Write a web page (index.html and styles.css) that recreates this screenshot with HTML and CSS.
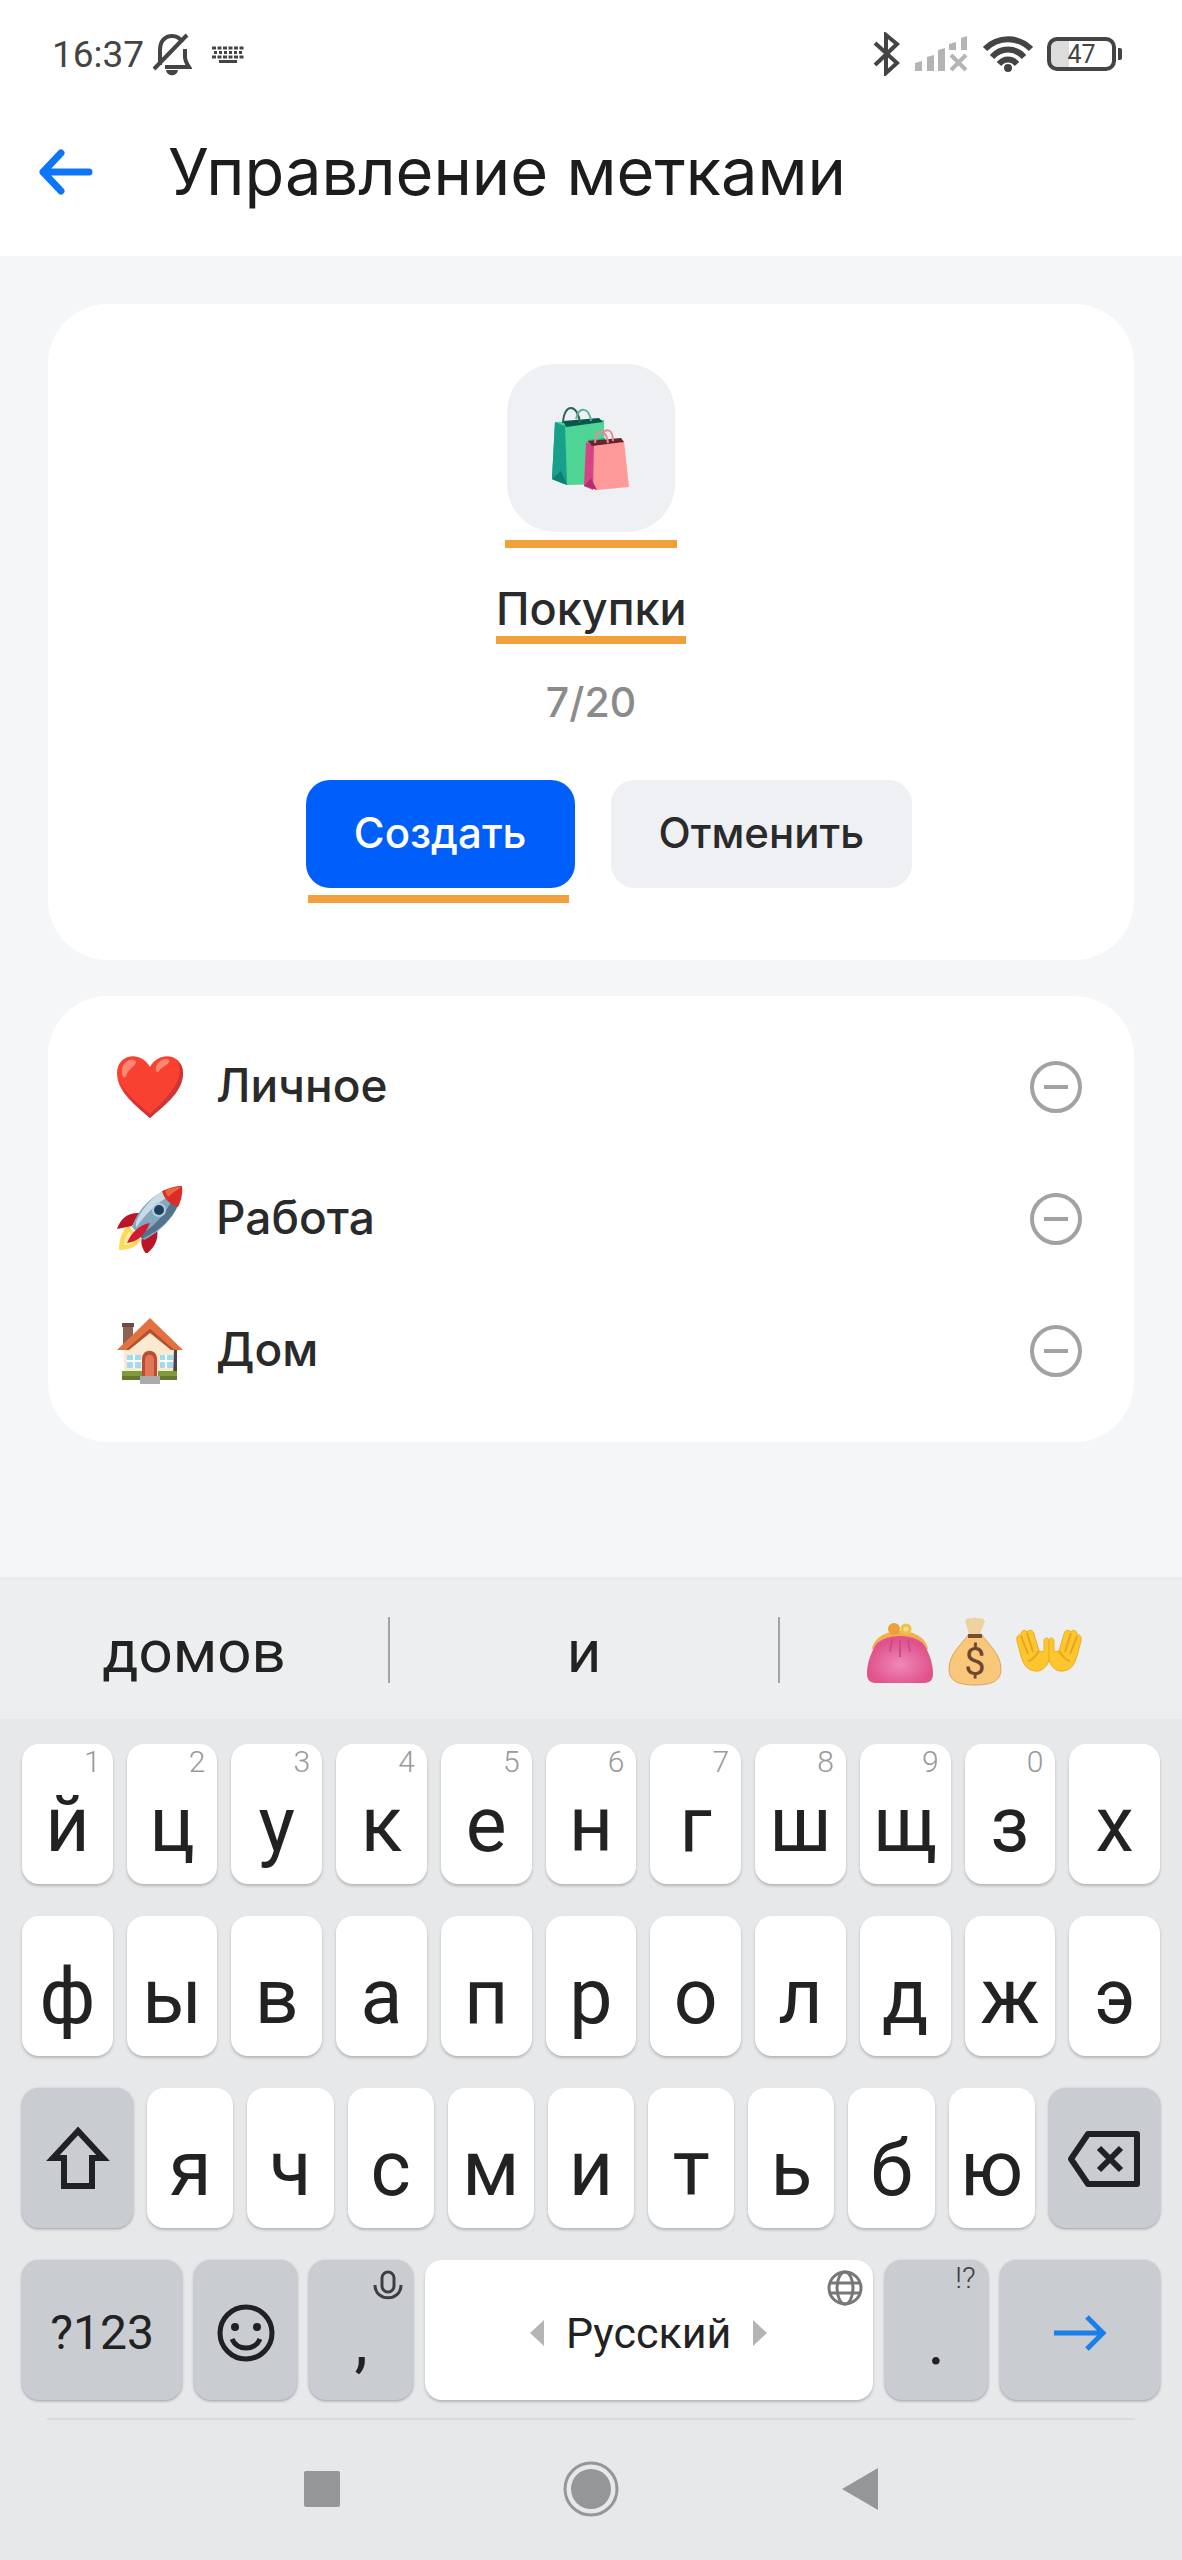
FILE: index.html
```html
<!DOCTYPE html>
<html lang="ru">
<head>
    <meta charset="UTF-8">
    <meta name="viewport" content="width=device-width, initial-scale=1">
    <title>Управление метками</title>
    <link rel="stylesheet" href="styles.css">
</head>
<body>
    <div class="screen">
        <header class="top">
            <div class="status-bar">
                <div class="status-left">
                    <span class="clock">16:37</span>
                    <svg class="bell" width="40" height="44" viewBox="0 0 40 44" fill="none" stroke="#444" stroke-width="4">
                        <path d="M8 33V18C8 9 13 4 20 4c5 0 8 2 10 6M33 17v8c0 4 2 7 4 10H13"/>
                        <path d="M35 3L2 37"/>
                        <path d="M14 38h12c-1 7-11 7-12 0z" fill="#444" stroke="none"/>
                    </svg>
                    <svg width="32" height="18" viewBox="0 0 32 18" fill="none" stroke="#444" stroke-width="3">
                        <path d="M0 3h32M0 12h32" stroke-dasharray="4 1.5"/>
                        <path d="M2 7.500h29" stroke-dasharray="3 2"/>
                        <path d="M7 16.500h18"/>
                    </svg>
                </div>
                <div class="status-right">
                    <svg width="28" height="44" viewBox="0 0 28 44" fill="none" stroke="#444" stroke-width="4">
                        <path d="M2 11l22 20-11 10V3l11 9L2 33"/>
                    </svg>
                    <svg width="54" height="36" viewBox="0 0 54 36">
                        <g fill="#b4b4b4">
                            <path d="M0 27l7-2v10H0zM12 21l7-2v16h-7zM23 14l7-2v23h-7zM34 8l7-2v8h-7zM46 2l6-2v14h-6z"/>
                        </g>
                        <path d="M36 19l15 15M51 19L36 34" stroke="#b4b4b4" stroke-width="4"/>
                    </svg>
                    <svg width="50" height="38" viewBox="0 0 50 38" fill="none" stroke="#444" stroke-width="6">
                        <path d="M2 14C15 1 35 1 48 14M9 22c9-10 23-10 32 0M16 29c5-6 13-6 18 0"/>
                        <circle cx="25" cy="33" r="4" fill="#444" stroke="none"/>
                    </svg>
                    <div class="battery"><span class="battery-body">47</span><span class="battery-tip"></span></div>
                </div>
            </div>
            <div class="title-bar">
                <a class="back" href="#" aria-label="Назад">
                    <svg width="56" height="46" viewBox="0 0 56 46" fill="none" stroke="#0c76f6" stroke-width="7" stroke-linecap="round" stroke-linejoin="round">
                        <path d="M51 23H5M23 4L5 23l18 19"/>
                    </svg>
                </a>
                <h1 class="title">Управление метками</h1>
            </div>
        </header>

        <main class="content">
            <form class="card tag-form" onsubmit="return false">
                <div class="marked tile-box">
                    <button class="tile" type="button" aria-label="Выбрать значок">
                        <svg width="78" height="84" viewBox="0 0 78 84">
                            <path d="M3 16l9 5 0 57-12-5z" fill="#0f9384"/>
                            <path d="M3 16l49-2 1 64-38 1z" fill="#4ed495"/>
                            <path d="M36 34l17-2v46l-19 1z" fill="#2ab185"/>
                            <path d="M3 16l10 4 2 59-15-6z" fill="#18a08c"/>
                            <path d="M9 65l6 14-15-6z" fill="#0b8074"/>
                            <path d="M11 15l36-3 4 4-37 5z" fill="#07564d"/>
                            <path d="M11 17C12-4 26-2 28 17" fill="none" stroke="#2a6658" stroke-width="2"/>
                            <path d="M24 13c3-13 13-12 15 2" fill="none" stroke="#5faf98" stroke-width="2"/>
                            <path d="M34 37l38-2 5 46-32 3-12-4z" fill="#ff9a9b"/>
                            <path d="M34 36l8 3-1 45-9-4z" fill="#d54586"/>
                            <path d="M39 72l6 12-13-4z" fill="#b62c70"/>
                            <path d="M36 35l33-3 3 4-32 4z" fill="#6b222d"/>
                            <path d="M43 37c1-16 11-15 13 0M50 28c5-7 11-4 11 7" fill="none" stroke="#e68b93" stroke-width="2"/>
                        </svg>
                    </button>
                </div>
                <div class="marked name-box">
                    <input class="name" type="text" value="Покупки" maxlength="20" aria-label="Название метки">
                </div>
                <div class="counter">7/20</div>
                <div class="actions">
                    <div class="marked create-box">
                        <button class="btn btn-primary" type="submit">Создать</button>
                    </div>
                    <button class="btn" type="button">Отменить</button>
                </div>
            </form>

            <ul class="card tag-list">
                <li class="tag">
                    <svg class="tag-icon" width="68" height="68" viewBox="0 0 68 68">
                        <path d="M34 65C22 54 1 40 1 20 1 1 25-3 34 14 43-3 67 1 67 20c0 20-21 34-33 45z" fill="#f94132"/>
                        <path d="M62 9c7 18-10 35-28 52C22 50 8 40 4 28c4 16 20 28 30 37C46 54 67 40 67 20c0-5-2-9-5-11z" fill="#cf3436"/>
                        <path d="M6 20C5 10 14 4 20 8c1 4-8 8-10 15-1 3-4 1-4-3zM40 14c2-6 9-10 13-7 2 4-8 7-10 11-1 3-4 0-3-4z" fill="#ff8873"/>
                    </svg>
                    <span class="tag-name">Личное</span>
                    <button class="remove" type="button" aria-label="Удалить Личное"></button>
                </li>
                <li class="tag">
                    <svg class="tag-icon" width="68" height="68" viewBox="0 0 68 68">
                        <path d="M12 40C6 46 3 54 3 65c10 0 17-3 22-10z" fill="#ffd95c"/>
                        <path d="M13 47c-3 4-5 8-5 13 6 0 9-2 13-6z" fill="#fff0a2"/>
                        <path d="M24 28C12 27 4 34 1 44l15-3zM41 45c2 9-3 19-11 24-3-5-6-10-4-16z" fill="#bd1528"/>
                        <path d="M16 42C22 23 40 4 66 1 67 25 46 46 28 55z" fill="#83a8bf"/>
                        <path d="M20 37C26 23 36 13 46 6l6 6C39 19 28 31 20 43z" fill="#c8dbe6"/>
                        <path d="M26 54C43 46 57 33 62 20l-6-5C49 30 37 43 23 50z" fill="#52738b"/>
                        <path d="M46 6C53 3 59 1 66 1c1 8-1 14-4 21-8-3-14-8-16-16z" fill="#dc2c26"/>
                        <path d="M49 6c5-3 11-4 16-4-5 4-9 6-13 10z" fill="#ee6546"/>
                        <path d="M34 38c-10 1-19 10-23 20 10-1 18-8 23-20z" fill="#cf1c31"/>
                        <circle cx="43" cy="25" r="7" fill="#b7ccd8"/>
                        <circle cx="43" cy="25" r="5" fill="#1e405f"/>
                    </svg>
                    <span class="tag-name">Работа</span>
                    <button class="remove" type="button" aria-label="Удалить Работа"></button>
                </li>
                <li class="tag">
                    <svg class="tag-icon" width="68" height="68" viewBox="0 0 68 68">
                        <path d="M7 7h10v20H7z" fill="#8c6252"/>
                        <path d="M6 6h12v4H6z" fill="#6f4c41"/>
                        <path d="M34 6L8 31v30h52V31z" fill="#fbead0"/>
                        <path d="M58 32h3v28h-4z" fill="#4b4646"/>
                        <path d="M34 1L1 33h8L34 11l25 22h8z" fill="#e3703f"/>
                        <path d="M34 11L9 33h4l21-17 21 17h4z" fill="#b85130"/>
                        <path d="M11 38h14v13H11zM44 38h13v13H44z" fill="#9edcee"/>
                        <path d="M18 38v13M11 44h14M50 38v13M44 44h13" stroke="#fff" stroke-width="2"/>
                        <path d="M6 54h20v9H6zM42 54h19v9H42z" fill="#7e9a3c"/>
                        <path d="M6 59h20v4H6zM42 59h19v4H42z" fill="#62792f"/>
                        <path d="M26 60V42c0-11 15-11 15 0v18z" fill="#bf4a36"/>
                        <path d="M29 59V43c0-7 9-7 9 0v16z" fill="#e0765a"/>
                        <path d="M24 59h20v8H24z" fill="#aaa"/>
                    </svg>
                    <span class="tag-name">Дом</span>
                    <button class="remove" type="button" aria-label="Удалить Дом"></button>
                </li>
            </ul>
        </main>

        <section class="keyboard" aria-label="Клавиатура">
            <div class="suggestions">
                <button class="suggestion" type="button">домов</button>
                <button class="suggestion" type="button">и</button>
                <button class="suggestion" type="button" aria-label="Эмодзи">
                    <svg width="68" height="68" viewBox="0 0 68 68">
                        <defs>
                            <radialGradient id="purse" cy="60%">
                                <stop offset="0" stop-color="#f088b8"/>
                                <stop offset="1" stop-color="#e0528c"/>
                            </radialGradient>
                        </defs>
                        <path d="M6 32C10 8 58 8 62 32l-8 4H14z" fill="#f2b04c"/>
                        <circle cx="28" cy="12" r="6" fill="#eba03a"/>
                        <circle cx="40" cy="12" r="4" fill="#f5dc8a" stroke="#eec245" stroke-width="3"/>
                        <path d="M1 57c0-10 3-18 7-26C14 15 54 15 60 31c4 8 7 16 7 26 0 7-4 9-10 9H11C5 66 1 64 1 57z" fill="url(#purse)"/>
                        <path d="M34 23v17M26 23l-2 12M42 23l2 12" stroke="#c2508c" stroke-width="2"/>
                    </svg>
                    <svg width="54" height="72" viewBox="0 0 54 72">
                        <path d="M21 19L17 6c3-6 6 0 9-4 4 3 7-1 11 4l-5 13z" fill="#eed2a0"/>
                        <path d="M20 20C14 29 1 39 1 54c0 13 11 16 26 16s26-3 26-16C53 39 40 29 34 20z" fill="#f8c779" stroke="#d9a45c"/>
                        <path d="M20 19h14v4H20z" fill="#7a4c36"/>
                        <text x="27" y="60" text-anchor="middle" class="dollar">$</text>
                    </svg>
                    <svg width="66" height="44" viewBox="0 0 66 44">
                        <path id="hand" d="M1 12C0 7 3 5 5 6 5 1 9 0 11 3 14 0 17 1 18 5l5 17 5 1V12c0-4 5-4 5 0v19c-2 8-9 12-14 11C10 41 7 34 5 27z" fill="#fdc62e" stroke="#f0ad20"/>
                        <use href="#hand" transform="matrix(-1 0 0 1 66 0)"/>
                        <path d="M5 7l7 18M11 4l6 19M61 7l-7 18M55 4l-6 19M12 32c3 0 7-4 11-10M54 32c-3 0-7-4-11-10" fill="none" stroke="#e8a420" stroke-width="2"/>
                    </svg>
                </button>
            </div>

            <div class="keys">
                <div class="key-row">
                    <button class="key" type="button"><span class="hint">1</span>й</button>
                    <button class="key" type="button"><span class="hint">2</span>ц</button>
                    <button class="key" type="button"><span class="hint">3</span>у</button>
                    <button class="key" type="button"><span class="hint">4</span>к</button>
                    <button class="key" type="button"><span class="hint">5</span>е</button>
                    <button class="key" type="button"><span class="hint">6</span>н</button>
                    <button class="key" type="button"><span class="hint">7</span>г</button>
                    <button class="key" type="button"><span class="hint">8</span>ш</button>
                    <button class="key" type="button"><span class="hint">9</span>щ</button>
                    <button class="key" type="button"><span class="hint">0</span>з</button>
                    <button class="key" type="button">х</button>
                </div>
                <div class="key-row">
                    <button class="key" type="button">ф</button>
                    <button class="key" type="button">ы</button>
                    <button class="key" type="button">в</button>
                    <button class="key" type="button">а</button>
                    <button class="key" type="button">п</button>
                    <button class="key" type="button">р</button>
                    <button class="key" type="button">о</button>
                    <button class="key" type="button">л</button>
                    <button class="key" type="button">д</button>
                    <button class="key" type="button">ж</button>
                    <button class="key" type="button">э</button>
                </div>
                <div class="key-row row-shift">
                    <button class="key key-dark" type="button" aria-label="Shift">
                        <svg width="64" height="66" viewBox="0 0 64 66" fill="none" stroke="#1f2124" stroke-width="6">
                            <path d="M32 5L7 32h11v28h28V32h11z"/>
                        </svg>
                    </button>
                    <button class="key" type="button">я</button>
                    <button class="key" type="button">ч</button>
                    <button class="key" type="button">с</button>
                    <button class="key" type="button">м</button>
                    <button class="key" type="button">и</button>
                    <button class="key" type="button">т</button>
                    <button class="key" type="button">ь</button>
                    <button class="key" type="button">б</button>
                    <button class="key" type="button">ю</button>
                    <button class="key key-dark" type="button" aria-label="Стереть">
                        <svg width="74" height="56" viewBox="0 0 74 56" fill="none" stroke="#1f2124" stroke-width="6" stroke-linejoin="round">
                            <path d="M4 28L21 3h49v50H21zM32 17l22 22M54 17L32 39"/>
                        </svg>
                    </button>
                </div>
                <div class="key-row row-space">
                    <button class="key key-dark key-label" type="button">?123</button>
                    <button class="key key-dark key-label" type="button" aria-label="Эмодзи">
                        <svg width="58" height="58" viewBox="0 0 58 58">
                            <circle cx="29" cy="29" r="26" fill="none" stroke="#1f2124" stroke-width="5"/>
                            <circle cx="18" cy="23" r="4" fill="#1f2124"/>
                            <circle cx="40" cy="23" r="4" fill="#1f2124"/>
                            <path d="M15 35c5 12 23 12 28 0" fill="none" stroke="#1f2124" stroke-width="5"/>
                        </svg>
                    </button>
                    <button class="key key-dark key-letter" type="button">
                        <span class="hint">
                            <svg width="30" height="30" viewBox="0 0 30 30" fill="none" stroke="#3c3e42" stroke-width="3">
                                <rect x="9" y="2" width="12" height="20" rx="6"/>
                                <path d="M2 15c0 17 26 17 26 0"/>
                            </svg>
                        </span>,
                    </button>
                    <button class="key key-space" type="button">
                        <span class="hint">
                            <svg width="36" height="36" viewBox="0 0 36 36" fill="none" stroke="#777" stroke-width="3">
                                <circle cx="18" cy="18" r="16"/>
                                <ellipse cx="18" cy="18" rx="8" ry="16"/>
                                <path d="M3 13h30M3 23h30"/>
                            </svg>
                        </span>
                        <svg width="14" height="26" viewBox="0 0 14 26"><path d="M14 0v26L0 13z" fill="#b4b4b4"/></svg>
                        <span>Русский</span>
                        <svg width="14" height="26" viewBox="0 0 14 26"><path d="M0 0v26l14-13z" fill="#b4b4b4"/></svg>
                    </button>
                    <button class="key key-dark key-letter" type="button"><span class="hint">!?</span>.</button>
                    <button class="key key-dark key-label" type="button" aria-label="Далее">
                        <svg width="54" height="38" viewBox="0 0 54 38" fill="none" stroke="#1a7fe8" stroke-width="5">
                            <path d="M1 19h48M34 3l16 16-16 16"/>
                        </svg>
                    </button>
                </div>
            </div>

            <nav class="nav">
                <button class="nav-btn" type="button" aria-label="Недавние">
                    <svg width="36" height="36" viewBox="0 0 36 36"><rect width="36" height="36" rx="2" fill="#959698"/></svg>
                </button>
                <button class="nav-btn" type="button" aria-label="Домой">
                    <svg width="56" height="56" viewBox="0 0 56 56">
                        <circle cx="28" cy="28" r="26" fill="none" stroke="#959698" stroke-width="3"/>
                        <circle cx="28" cy="28" r="20" fill="#959698"/>
                    </svg>
                </button>
                <button class="nav-btn" type="button" aria-label="Назад">
                    <svg width="36" height="42" viewBox="0 0 36 42"><path d="M36 0v42L0 21z" fill="#959698"/></svg>
                </button>
            </nav>
        </section>
    </div>
</body>
</html>
```
FILE: styles.css
```css
* {
    box-sizing: border-box;
}
body {
    margin: 0;
    background: #f4f6f8;
    color: #2a2a2a;
    font-family: Inter, "Open Sans", sans-serif;
}
button, input {
    margin: 0;
    padding: 0;
    border: none;
    background: none;
    color: inherit;
    font: inherit;
}
button {
    cursor: pointer;
}
svg {
    display: block;
    flex: none;
}
.screen {
    display: flex;
    flex-direction: column;
    min-height: 100vh;
}

/* status bar and title */
.top {
    background: #fff;
}
.status-bar {
    display: flex;
    justify-content: space-between;
    align-items: center;
    height: 108px;
    padding: 0 60px 0 52px;
    font-family: Roboto, sans-serif;
    color: #444;
}
.status-left, .status-right {
    display: flex;
    align-items: center;
}
.status-left {
    gap: 20px;
}
.status-right {
    gap: 14px;
}
.clock {
    font-size: 37px;
}
.bell {
    margin-left: -12px;
}
.battery {
    display: flex;
    align-items: center;
    gap: 2px;
}
.battery-body {
    width: 69px;
    height: 34px;
    border: 4px solid #444;
    border-radius: 10px;
    background: linear-gradient(90deg, #dcdcdc 30%, #fff 30%);
    font-size: 25px;
    line-height: 28px;
    text-align: center;
}
.battery-tip {
    width: 4px;
    height: 12px;
    border-radius: 0 2px 2px 0;
    background: #444;
}
.title-bar {
    display: flex;
    align-items: center;
    gap: 74px;
    height: 148px;
    padding: 0 38px 20px;
}
.title {
    margin: 0;
    color: #1c1c1c;
    font-size: 65px;
    font-weight: 400;
    line-height: 76px;
}

/* cards */
.content {
    display: flex;
    flex: 1;
    flex-direction: column;
    gap: 36px;
    padding: 48px;
}
.card {
    margin: 0;
    border-radius: 60px;
    background: #fff;
}
.tag-form {
    display: flex;
    flex-direction: column;
    align-items: center;
    padding: 60px 48px 57px;
    font-weight: 500;
}
.marked::after {
    content: "";
    display: block;
    height: 8px;
    background: #f2a03b;
}
.tile-box {
    display: grid;
    justify-items: center;
    gap: 8px;
    width: 172px;
}
.tile-box::after {
    width: 100%;
}
.tile {
    display: grid;
    place-items: center;
    width: 168px;
    height: 168px;
    border-radius: 48px;
    background: #eff0f4;
}
.name-box {
    width: 190px;
    margin-top: 32px;
}
.name {
    display: block;
    width: 100%;
    height: 56px;
    font-size: 45px;
    text-align: center;
    outline: none;
}
.counter {
    margin-top: 33px;
    color: #8b8b8b;
    font-size: 41px;
    line-height: 50px;
}
.actions {
    display: flex;
    align-items: flex-start;
    gap: 36px;
    margin-top: 53px;
    padding-left: 36px;
}
.create-box::after {
    margin: 7px 6px 0 2px;
}
.btn {
    height: 108px;
    padding: 0 48px 4px;
    border-radius: 24px;
    background: #eff0f4;
    font-size: 42px;
}
.btn-primary {
    background: #005ffb;
    color: #fff;
}

.tag-list {
    padding: 25px 52px 25px 68px;
    list-style: none;
}
.tag {
    display: flex;
    align-items: center;
    gap: 32px;
    height: 132px;
}
.tag-name {
    flex: 1;
    padding-bottom: 4px;
    font-size: 46px;
    font-weight: 500;
}
.remove {
    display: grid;
    place-items: center;
    width: 52px;
    height: 52px;
    border: 4px solid #a2a2a2;
    border-radius: 50%;
}
.remove::before {
    content: "";
    width: 24px;
    height: 4px;
    background: #a2a2a2;
}

/* keyboard */
.keyboard {
    background: #e7e8ea;
    color: #222;
    font-family: Roboto, sans-serif;
}
.suggestions {
    display: flex;
    align-items: center;
    height: 142px;
    padding-right: 14px;
    border-top: 3px solid #e9eaec;
    background: #edeef0;
}
.suggestion {
    display: flex;
    flex: 1;
    justify-content: center;
    align-items: center;
    gap: 14px;
    height: 66px;
    padding-top: 3px;
    font-size: 60px;
}
.suggestion + .suggestion {
    border-left: 2px solid #a4a5a7;
}
.dollar {
    fill: #6f4632;
    font-size: 38px;
}
.keys {
    display: flex;
    flex-direction: column;
    gap: 32px;
    padding: 25px 22px 18px;
}
.key-row {
    display: grid;
    grid-template-columns: repeat(11, 1fr);
    gap: 14px;
}
.row-shift {
    grid-template-columns: 111fr repeat(9, 86fr) 111fr;
}
.row-space {
    grid-template-columns: 160fr 103fr 103fr 447fr 103fr 160fr;
    gap: 12px;
}
.key {
    position: relative;
    display: flex;
    justify-content: center;
    align-items: center;
    height: 140px;
    padding-top: 22px;
    border-radius: 17px;
    background: #fff;
    box-shadow: 0 2px 3px #b4b5b8;
    font-size: 77px;
    line-height: 90px;
}
.key-dark {
    padding-top: 2px;
    background: #c9ccd1;
    box-shadow: 0 1px 3px #96999e;
}
.key-letter {
    padding-top: 22px;
    font-size: 68px;
}
.key-label {
    padding-top: 6px;
    font-size: 48px;
}
.key-space {
    gap: 22px;
    padding-top: 6px;
    font-size: 43px;
}
.hint {
    position: absolute;
    top: 0;
    right: 12px;
    color: #999;
    font-size: 30px;
    font-weight: 300;
    line-height: 36px;
}
.hint svg {
    margin: 10px -2px 0 0;
}
.key-dark .hint {
    color: #3c3e42;
}

.nav {
    display: grid;
    grid-template-columns: repeat(3, 269px);
    justify-content: center;
    height: 142px;
    margin: 0 47px;
    padding-bottom: 2px;
    border-top: 2px solid #d9dadc;
}
.nav-btn {
    display: grid;
    place-items: center;
}
```
